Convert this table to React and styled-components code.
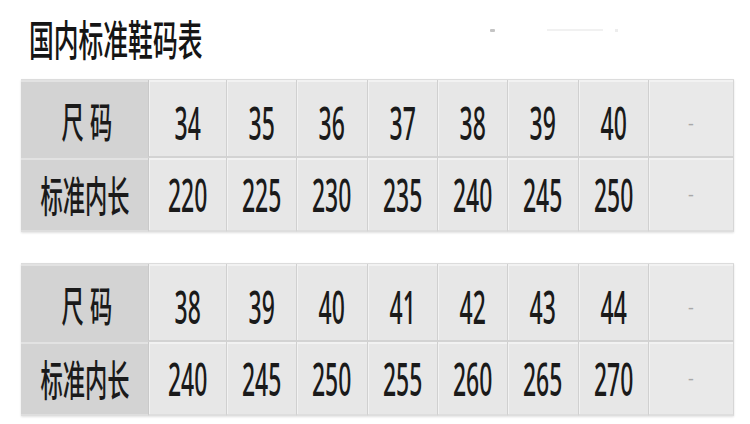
import React from 'react';
import styled, { createGlobalStyle } from 'styled-components';

const GlobalStyle = createGlobalStyle`
  html, body {
    margin: 0;
    padding: 0;
    background: #ffffff;
  }
  body {
    width: 750px;
    height: 424px;
    overflow: hidden;
    font-family: "Noto Sans", "Noto Sans CJK SC", sans-serif;
    color: #1e1e1e;
  }
`;

const tables = [
  { sizes: ['34', '35', '36', '37', '38', '39', '40'], lengths: ['220', '225', '230', '235', '240', '245', '250'] },
  { sizes: ['38', '39', '40', '41', '42', '43', '44'], lengths: ['240', '245', '250', '255', '260', '265', '270'] },
];

export default function App() {
  return <Page>
    <GlobalStyle/>
    <Header>
      <Title><span>国内标准鞋码表</span></Title>
      <Marks>
        <Dot/>
        <FaintLine/>
        <FaintDot/>
      </Marks>
    </Header>
    {tables.map((t, i) => (
      <SizeTable key={i} $first={i === 0}>
        <LabelCell $top><Cjk $spaced>尺码</Cjk></LabelCell>
        {t.sizes.map(s => <Cell key={s} $top><Num>{s}</Num></Cell>)}
        <Cell $top $last><Dash>-</Dash></Cell>
        <LabelCell><Cjk>标准内长</Cjk></LabelCell>
        {t.lengths.map(l => <Cell key={l}><Num>{l}</Num></Cell>)}
        <Cell $last><Dash>-</Dash></Cell>
      </SizeTable>
    ))}
  </Page>;
}

const Page = styled.div`
  padding-top: 17px;
`;

const Header = styled.div`
  display: flex;
  align-items: center;
  height: 42px;
`;

const Title = styled.h1`
  margin: 0 0 0 29px;
  width: 294px;
  font-family: "Noto Sans CJK SC", sans-serif;
  font-weight: 500;
  font-size: 42px;
  line-height: 42px;
  color: #151515;

  span {
    display: inline-block;
    transform: scaleX(0.59);
    transform-origin: left center;
    white-space: nowrap;
  }
`;

const Marks = styled.div`
  display: flex;
  align-items: center;
  margin-left: 167px;
  margin-top: -16px;
`;

const Dot = styled.span`
  width: 5px;
  height: 3px;
  background: #c4c4c4;
  border-radius: 1px;
`;

const FaintLine = styled.span`
  width: 56px;
  height: 2px;
  margin-left: 52px;
  background: #f1f1f1;
`;

const FaintDot = styled.span`
  width: 3px;
  height: 3px;
  margin-left: 12px;
  background: #ededed;
`;

const SizeTable = styled.div`
  display: grid;
  grid-template-columns: 128px 78px 70px 71px 70px 70px 71px 70px 85px;
  grid-template-rows: 78px 74px;
  width: 713px;
  margin: ${p => (p.$first ? '20px' : '31px')} 0 0 21px;
  border-top: 1px solid #dcdcdc;
  box-shadow: 0 1px 2px rgba(0, 0, 0, 0.12);
  background: #e6e6e6;
`;

const Cell = styled.div`
  display: flex;
  align-items: center;
  justify-content: center;
  box-sizing: border-box;
  padding-top: ${p => (p.$top ? '9px' : '0')};
  background: ${p => (p.$last ? '#e9e9e9' : '#e7e7e7')};
  border-right: ${p => (p.$last ? '1px solid #d6d6d6' : '1px solid #d0d0d0')};
  border-bottom: 2px solid ${p => (p.$top ? '#d3d3d3' : '#dedede')};
  box-shadow: inset 1px 2px 0 #f2f2f2;
`;

const LabelCell = styled(Cell)`
  padding-top: ${p => (p.$top ? '4px' : '0')};
  background: #d3d3d3;
  border-right: 1px solid #c9c9c9;
  box-shadow: inset 0 2px 0 #e2e2e2;
`;

const Num = styled.span`
  display: inline-block;
  font-family: "Noto Sans", sans-serif;
  font-weight: 500;
  font-size: 45px;
  line-height: 1;
  transform: scaleX(0.51);
  white-space: nowrap;
  color: #1a1a1a;
`;

const Cjk = styled.span`
  display: inline-block;
  font-family: "Noto Sans CJK SC", sans-serif;
  font-weight: 500;
  font-size: 42px;
  line-height: 1;
  letter-spacing: ${p => (p.$spaced ? '12px' : '0')};
  margin-right: ${p => (p.$spaced ? '-12px' : '0')};
  transform: scaleX(0.53);
  white-space: nowrap;
  color: #1a1a1a;
`;

const Dash = styled.span`
  font-family: "Noto Sans", sans-serif;
  font-size: 18px;
  line-height: 1;
  color: #a8a8a8;
`;
